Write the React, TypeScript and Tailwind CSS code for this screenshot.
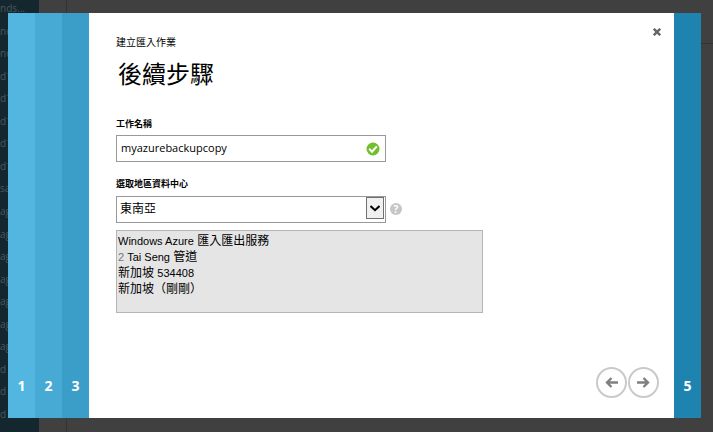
import React, { useState } from "react";

const listItems = [
  "nds...", "nd", "nd", "d1", "d1", "d1", "d1", "d1", "sa", "ag",
  "ag", "ag", "ag", "ag", "ag", "ag", "d", "d", "d",
];

const steps = [
  { label: "1", color: "bg-[#52b6e1]" },
  { label: "2", color: "bg-[#46aad5]" },
  { label: "3", color: "bg-[#3a9ec9]" },
];

function Step({ label, color }: { label: string; color: string }) {
  return (
    <button
      type="button"
      className={`flex w-[27px] shrink-0 items-end justify-center pb-[22px] text-sm leading-5 font-bold text-white ${color}`}
    >
      {label}
    </button>
  );
}

function Backdrop() {
  return (
    <div aria-hidden="true" className="flex h-full overflow-hidden bg-[#404040]">
      <div className="w-[39px] shrink-0 bg-[#14272f]">
        <ul className="-mt-[3px] grid h-[428px] auto-rows-fr text-[10px] leading-4 text-[#4d5659]">
          {listItems.map((item, i) => (
            <li key={i} className="flex items-center">
              {item}
            </li>
          ))}
        </ul>
      </div>
      <div className="w-7 shrink-0 border-r border-[#333333]" />
      <div className="h-11 flex-1 border-b border-[#333333]" />
    </div>
  );
}

function ArrowButton({ label, path }: { label: string; path: string }) {
  return (
    <button
      type="button"
      aria-label={label}
      className="flex size-[31px] items-center justify-center rounded-full border-2 border-[#cacaca] bg-white"
    >
      <svg width="13" height="11" viewBox="0 0 13 11" fill="none" stroke="#808080" strokeWidth="2.4">
        <path d={path} />
      </svg>
    </button>
  );
}

function Latin({ children }: { children: React.ReactNode }) {
  return <span className="text-[11px]">{children}</span>;
}

export default function App() {
  const [name, setName] = useState("myazurebackupcopy");

  return (
    <div className="relative h-screen overflow-hidden font-['Open_Sans','Noto_Sans_CJK_TC',sans-serif] text-black">
      <Backdrop />
      <div
        role="dialog"
        aria-labelledby="dialog-title"
        className="absolute top-[13px] right-3 bottom-[14px] left-2 flex bg-white"
      >
        {steps.map((step) => (
          <Step key={step.label} label={step.label} color={step.color} />
        ))}

        <main className="flex min-w-0 flex-1 flex-col pt-[21px] pr-[15px] pb-[20px] pl-[27px]">
          <header className="flex items-start justify-between">
            <div>
              <p className="text-[10px] leading-4">建立匯入作業</p>
              <h1 id="dialog-title" className="mt-2 ml-[2px] text-2xl leading-8">
                後續步驟
              </h1>
            </div>
            <button type="button" aria-label="關閉" className="-mt-4 -mr-3 p-[10px]">
              <svg className="block" width="8" height="8" viewBox="0 0 8 8" stroke="#666666" strokeWidth="2.4">
                <path d="M0.8 0.8 7.2 7.2M7.2 0.8 0.8 7.2" />
              </svg>
            </button>
          </header>

          <form className="mt-[26px]" onSubmit={(e) => e.preventDefault()}>
            <label htmlFor="job-name" className="block text-[9px] leading-4 font-bold">
              工作名稱
            </label>
            <div className="mt-[3px] flex h-[27px] w-[270px] items-center border border-[#999999] pr-[5px] pl-1">
              <input
                id="job-name"
                value={name}
                onChange={(e) => setName(e.target.value)}
                className="min-w-0 flex-1 pb-[2px] text-[11px] leading-4 outline-none"
              />
              <svg width="14" height="14" viewBox="0 0 14 14">
                <circle cx="7" cy="7" r="6.5" fill="#70bf2b" />
                <path d="M3.2 6.8 6 9.7 10.8 4.4" fill="none" stroke="#fff" strokeWidth="2.1" />
              </svg>
            </div>

            <label htmlFor="region" className="mt-[14px] block text-[9px] leading-4 font-bold">
              選取地區資料中心
            </label>
            <div className="mt-[3px] flex items-center gap-1">
              <div className="relative h-[27px] w-[270px]">
                <select
                  id="region"
                  className="h-full w-full appearance-none border border-[#999999] bg-white pl-[3px] text-xs outline-none"
                >
                  <option>東南亞</option>
                </select>
                <span className="pointer-events-none absolute top-[2px] right-[2px] flex h-[22px] w-[18px] items-center justify-center border border-[#707070] bg-[#f0f0f0]">
                  <svg width="10" height="7" viewBox="0 0 10 7" fill="none" stroke="#000" strokeWidth="2">
                    <path d="M0.5 1 5 5.2 9.5 1" />
                  </svg>
                </span>
              </div>
              <button
                type="button"
                aria-label="說明"
                className="flex size-3 items-center justify-center rounded-full bg-[#c6c6c6] text-[10px] leading-3 font-bold text-white"
              >
                ?
              </button>
            </div>

            <address className="mt-2 h-[83px] max-w-[367px] border border-[#b5b5b5] bg-[#e5e5e5] px-px pt-[2px] font-['Liberation_Sans','Noto_Sans_CJK_TC',sans-serif] text-xs leading-4 not-italic">
              <Latin>Windows Azure</Latin> 匯入匯出服務
              <br />
              <Latin>
                <span className="text-[#777777]">2</span> Tai Seng
              </Latin>{" "}
              管道
              <br />
              新加坡 <Latin>534408</Latin>
              <br />
              新加坡（剛剛）
            </address>
          </form>

          <nav className="mt-auto flex justify-end gap-px">
            <ArrowButton label="上一步" path="M13 5.5H2M6.5 1 2 5.5l4.5 4.5" />
            <ArrowButton label="下一步" path="M0 5.5h11M6.5 1 11 5.5 6.5 10" />
          </nav>
        </main>

        <Step label="5" color="bg-[#1f83b0]" />
      </div>
    </div>
  );
}
